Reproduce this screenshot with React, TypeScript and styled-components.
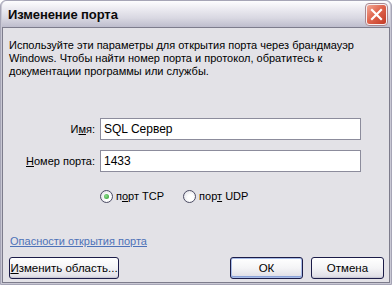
import React from "react";
import styled, { createGlobalStyle } from "styled-components";

const Global = createGlobalStyle`
  html, body { margin: 0; padding: 0; background: #ffffff; }
  body { font-family: "Liberation Sans", Arial, sans-serif; font-size: 11px; color: #000; }
`;

const Page = styled.div`
  width: 392px;
  height: 289px;
  display: flex;
  flex-direction: column;
  overflow: hidden;
`;

const Window = styled.div`
  width: 392px;
  height: 285px;
  flex: none;
  box-sizing: border-box;
  display: flex;
  flex-direction: column;
  background: #c9c8d4;
  border: 1px solid #a6a5b6;
  border-top-left-radius: 6px;
  border-top-right-radius: 6px;
  padding: 0 1px 1px 1px;
`;

const TitleBar = styled.div`
  height: 26px;
  flex: none;
  display: flex;
  align-items: center;
  justify-content: space-between;
  padding: 0 2px 0 6px;
  background: linear-gradient(#fdfdfe 0%, #ecebf1 30%, #d9d8e2 65%, #bebdcd 100%);
  border-top-left-radius: 5px;
  border-top-right-radius: 5px;
`;

const Title = styled.div`
  font-family: "Liberation Sans", Arial, sans-serif;
  font-weight: bold;
  font-size: 13px;
  color: #0a0a0a;
  letter-spacing: -0.1px;
`;

const CloseIcon = styled.svg`
  display: block;
  flex: none;
`;

const Content = styled.div`
  flex: 1;
  display: flex;
  flex-direction: column;
  background: #e3e2e7;
  border: 1px solid #7d7c8c;
  padding: 11px 8px 3px 6px;
`;

const Paragraph = styled.p`
  margin: 0;
  line-height: 13px;
  width: 350px;
`;

const Form = styled.div`
  margin-top: 40px;
  display: grid;
  grid-template-columns: 86px 261px;
  column-gap: 5px;
  row-gap: 10px;
  align-items: center;
`;

const Label = styled.label`
  text-align: right;
`;

const Key = styled.span`
  text-decoration: underline;
`;

const Input = styled.div`
  height: 22px;
  box-sizing: border-box;
  background: #ffffff;
  border: 1px solid #8c8c9c;
  padding: 0 3px;
  display: flex;
  align-items: center;
  font-size: 12px;
`;

const RadioRow = styled.div`
  display: flex;
  gap: 19px;
  margin: 17px 0 0 91px;
  height: 14px;
  align-items: center;
`;

const RadioItem = styled.div`
  display: flex;
  align-items: center;
  gap: 3px;
`;

const RadioCircle = styled.span<{ $checked?: boolean }>`
  width: 13px;
  height: 13px;
  box-sizing: border-box;
  border-radius: 50%;
  border: 1px solid #4c4c64;
  background: radial-gradient(circle at 60% 60%, #ffffff 30%, #d8d8e0 100%);
  display: flex;
  align-items: center;
  justify-content: center;
  &::after {
    content: "";
    display: ${(p) => (p.$checked ? "block" : "none")};
    width: 5px;
    height: 5px;
    border-radius: 50%;
    background: radial-gradient(circle at 40% 40%, #8ee08e, #2a962a);
  }
`;

const Spacer = styled.div`
  flex: 1;
`;

const Link = styled.a`
  color: #4e72b8;
  text-decoration: underline;
  line-height: 13px;
  margin-left: 1px;
  margin-bottom: 9px;
`;

const ButtonRow = styled.div`
  display: flex;
  align-items: center;
`;

const Button = styled.div<{ $w: number; $default?: boolean }>`
  width: ${(p) => p.$w}px;
  height: 22px;
  flex: none;
  box-sizing: border-box;
  border: 1px solid #1c1c48;
  border-radius: 3px;
  background: linear-gradient(#ffffff 0%, #f4f4f6 50%, #e2e1e8 90%, #cfcedb 100%);
  display: flex;
  align-items: center;
  justify-content: center;
  font-size: 11.5px;
  white-space: nowrap;
  box-shadow: ${(p) =>
    p.$default ? "inset 0 0 0 1px #a8bce8, inset 0 -1px 0 1px #8aa2d8" : "inset 0 -1px 0 #c8c8d4"};
`;

const Gap = styled.div<{ $w: number }>`
  width: ${(p) => p.$w}px;
  flex: none;
`;

const Below = styled.div`
  flex: 1;
  background: #ffffff;
`;

export default function App() {
  return (
    <Page>
      <Global />
      <Window>
        <TitleBar>
          <Title>Изменение порта</Title>
          <CloseIcon width="23" height="23" viewBox="0 0 23 23">
            <defs>
              <linearGradient id="cl" x1="0" y1="0" x2="1" y2="1">
                <stop offset="0" stopColor="#f2a896" />
                <stop offset="0.45" stopColor="#e0664e" />
                <stop offset="1" stopColor="#c23a26" />
              </linearGradient>
            </defs>
            <rect x="0.5" y="0.5" width="22" height="22" rx="3.5" fill="#f6f0f2" stroke="#a88890" />
            <rect x="2" y="2" width="19" height="19" rx="2.5" fill="url(#cl)" />
            <path d="M7 7 L16 16 M16 7 L7 16" stroke="#ffffff" strokeWidth="2.2" strokeLinecap="square" />
          </CloseIcon>
        </TitleBar>
        <Content>
          <Paragraph>
            Используйте эти параметры для открытия порта через брандмауэр Windows. Чтобы найти номер порта и протокол, обратитесь к документации программы или службы.
          </Paragraph>
          <Form>
            <Label>
              И<Key>м</Key>я:
            </Label>
            <Input>SQL Сервер</Input>
            <Label>
              <Key>Н</Key>омер порта:
            </Label>
            <Input>1433</Input>
          </Form>
          <RadioRow>
            <RadioItem>
              <RadioCircle $checked />
              <span>
                п<Key>о</Key>рт TCP
              </span>
            </RadioItem>
            <RadioItem>
              <RadioCircle />
              <span>
                пор<Key>т</Key> UDP
              </span>
            </RadioItem>
          </RadioRow>
          <Spacer />
          <Link>Опасности открытия порта</Link>
          <ButtonRow>
            <Button $w={110}>
              <span>
                <Key>И</Key>зменить область...
              </span>
            </Button>
            <Gap $w={111} />
            <Button $w={73} $default>
              ОК
            </Button>
            <Gap $w={8} />
            <Button $w={73}>Отмена</Button>
          </ButtonRow>
        </Content>
      </Window>
      <Below>
        <svg width="392" height="4" viewBox="0 0 392 4">
          <line x1="0" y1="1.5" x2="283" y2="1.5" stroke="#000" strokeWidth="1" />
          <line x1="55.5" y1="0" x2="55.5" y2="4" stroke="#000" />
          <line x1="155.5" y1="0" x2="155.5" y2="4" stroke="#000" />
          <line x1="228.5" y1="0" x2="228.5" y2="4" stroke="#000" />
          <line x1="283.5" y1="0" x2="283.5" y2="4" stroke="#000" />
        </svg>
      </Below>
    </Page>
  );
}
